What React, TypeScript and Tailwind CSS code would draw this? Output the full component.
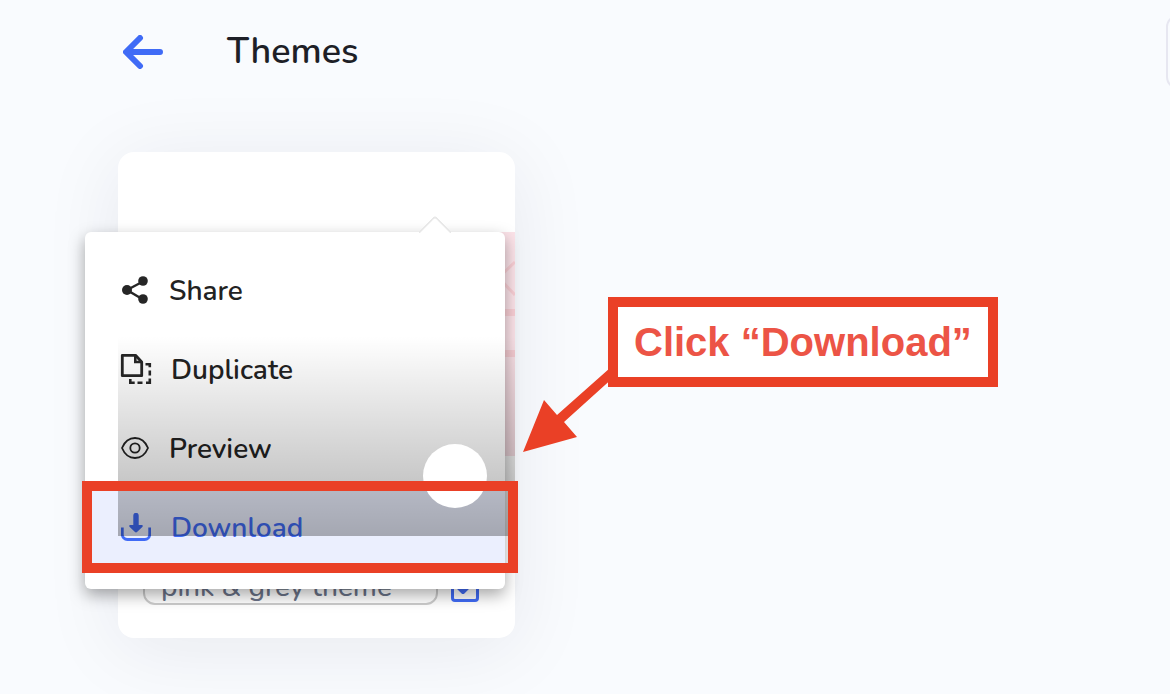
import type { ReactNode } from "react"

function ArrowLeftIcon() {
  return (
    <svg width="40" height="34" viewBox="0 0 40 34" fill="none" stroke="#406bf6" strokeWidth="6" strokeLinecap="round" strokeLinejoin="round">
      <path d="M37 17H4M17 3L3 17l14 14" />
    </svg>
  )
}

function ShareIcon() {
  return (
    <svg width="28" height="30" viewBox="0 1 28 30" fill="#262626" stroke="#262626">
      <path d="M22 6.500L6 15l16 9.500" fill="none" strokeWidth="2.400" />
      <circle cx="22" cy="6" r="4.800" stroke="none" />
      <circle cx="6" cy="15" r="5" stroke="none" />
      <circle cx="22" cy="24" r="4.800" stroke="none" />
    </svg>
  )
}

function DuplicateIcon() {
  return (
    <svg className="overflow-visible" width="30" height="30" viewBox="0 1 30 30" fill="none" stroke="#262626" strokeWidth="2.800">
      <path d="M1.300 1.300H14.500L20.700 8V21.700H1.300Z" strokeLinejoin="round" />
      <path d="M14.300 1.500V8H20.500" strokeWidth="2.600" />
      <path d="M24.500 10.300H28.800V13.300M28.800 16.500V21.500M28.800 24.500V28.800H25M21.500 28.800H16.500M13.700 28.800H9.300V25" strokeWidth="2.600" />
    </svg>
  )
}

function EyeIcon() {
  return (
    <svg className="overflow-visible" width="28" height="22" viewBox="0 1 28 22" fill="none" stroke="#222" strokeWidth="1.800">
      <path d="M1 11C3.500 5 8.300 1 14 1s10.500 4 13 10c-2.500 6-7.300 10-13 10S3.500 17 1 11Z" strokeLinejoin="round" />
      <circle cx="14" cy="11" r="4.700" />
    </svg>
  )
}

function DownloadIcon() {
  return (
    <svg width="30" height="30" viewBox="0 1 30 30" fill="none">
      <path d="M1.300 15.500V22.500a5 5 0 0 0 5 5H23.700a5 5 0 0 0 5-5V15.500" stroke="#406bf6" strokeWidth="2.800" />
      <path d="M12.300 3.500a2.700 2.700 0 0 1 5.400 0V13H20.500c1.300 0 1.700 1 .8 1.900L16.300 19.700a1.800 1.800 0 0 1-2.600 0L8.700 14.900C7.800 14 8.200 13 9.500 13h2.800Z" fill="#406bf6" />
    </svg>
  )
}

const menuItems: { label: string; icon: ReactNode; active?: boolean }[] = [
  { label: "Share", icon: <ShareIcon /> },
  { label: "Duplicate", icon: <DuplicateIcon /> },
  { label: "Preview", icon: <EyeIcon /> },
  { label: "Download", icon: <DownloadIcon />, active: true },
]

function ThemeMenu() {
  return (
    <div className="absolute top-20 -left-[33px] w-[420px] rounded-md bg-white pt-[19px] pb-[22px] shadow-[0_6px_16px_rgba(0,0,0,0.35)]">
      <span className="absolute -top-3 right-[58px] size-6 rotate-45 rounded-tl-sm border-t-2 border-l-2 border-[#e8e8e8] bg-white" />
      {menuItems.map((item) => (
        <button
          key={item.label}
          type="button"
          className={`relative flex h-[79px] w-full items-center gap-5 pl-9 text-left text-[28px] font-semibold ${
            item.active ? "bg-[#ebeffe] text-[#406bf6]" : "bg-white text-[#222]"
          }`}
        >
          {item.icon}
          {item.label}
        </button>
      ))}
    </div>
  )
}

function ThemeCard() {
  return (
    <section className="relative w-[397px] rounded-2xl bg-white pt-20 shadow-[0_10px_80px_rgba(30,30,50,0.08)]">
      <svg className="block h-56 w-full bg-[#fbe2e8]" viewBox="0 0 397 224" fill="none" stroke="#f8ced4">
        <path d="M397 30L376 50M376 41L397 63" strokeWidth="3" />
        <path d="M240 80.500H397M240 121.500H397" strokeWidth="7" />
      </svg>
      <div className="flex items-end gap-[13px] px-[25px] pt-[113px] pb-[33px]">
        <input
          type="text"
          aria-label="Theme name"
          defaultValue="pink & grey theme"
          className="h-9 w-[295px] rounded-xl border-2 border-[#ccc] bg-white px-4 text-[28px] leading-8 font-medium text-[#6b7388]"
        />
        <label className="relative mb-[3px] size-7">
          <input
            type="checkbox"
            defaultChecked
            aria-label="Select theme"
            className="block size-7 appearance-none rounded border-3 border-[#406bf6] bg-white"
          />
          <svg className="absolute inset-0" width="28" height="28" viewBox="0 0 28 28" fill="none" stroke="#406bf6" strokeWidth="4">
            <path d="M6 12l6 6 10-10" strokeLinecap="round" strokeLinejoin="round" />
          </svg>
        </label>
      </div>

      <ThemeMenu />
      <div className="pointer-events-none absolute inset-x-0 top-[184px] h-[200px] bg-linear-to-b from-black/0 to-black/30" />
      <button type="button" aria-label="Theme options" className="absolute top-[292px] right-7 size-16 rounded-full bg-white" />

      {/* highlight around the Download row */}
      <div className="pointer-events-none absolute top-[329px] -left-9 h-[92px] w-[436px] border-10 border-[#ea4026]" />
    </section>
  )
}

function Callout() {
  return (
    <aside className="absolute top-[297px] left-[608px] border-10 border-[#ea4026] bg-white px-4 py-[11px]">
      <svg className="absolute top-[61px] -left-[95px]" width="96" height="84" viewBox="0 0 96 84" fill="#ea4026">
        <path d="M0 84L21 32L34 47L87 0H92V8L41 54L54 69Z" />
      </svg>
      <p className="font-['Liberation_Sans',Arial,sans-serif] text-[40px] leading-12 font-bold whitespace-nowrap text-[#ec5446]">
        Click “Download”
      </p>
    </aside>
  )
}

export default function App() {
  return (
    <div className="relative min-h-screen overflow-hidden bg-[#f9fbfe] font-[Nunito,Lato,sans-serif]">
      <header className="flex h-[104px] items-center pl-[123px]">
        <a href="#back" aria-label="Back">
          <ArrowLeftIcon />
        </a>
        <h1 className="ml-16 text-[36px] leading-10 font-semibold text-[#1e1f27]">Themes</h1>
        <button type="button" aria-label="More" className="-mr-12 ml-auto h-[74px] w-[52px] rounded-xl border-2 border-[#e7e7f1] bg-[#f9fbfe]" />
      </header>
      <main className="px-[118px] pt-12 pb-14">
        <ThemeCard />
      </main>
      <Callout />
    </div>
  )
}
